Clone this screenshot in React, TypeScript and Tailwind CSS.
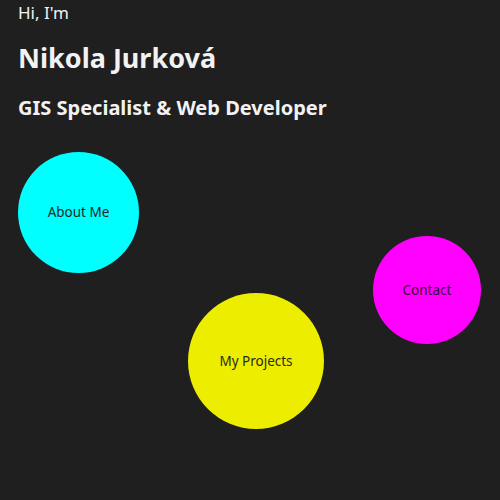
import React from "react";

export default function App() {
  const font = { fontFamily: '"Noto Sans", "Open Sans", sans-serif' };
  return (
    <div className="w-[500px] h-[500px] bg-[#1f1f1f] text-[#f2f2f2] relative overflow-hidden" style={font}>
      <div className="px-[18px] flex flex-col">
        <p className="text-[17px] leading-6 mt-[1px]">Hi, I'm</p>
        <h1 className="text-[27px] font-bold leading-9 mt-[15px]">Nikola Jurková</h1>
        <h2 className="text-[20px] font-bold leading-7 mt-[18px]">GIS Specialist &amp; Web Developer</h2>
      </div>
      <div className="absolute left-[18px] top-[152px] w-[121px] h-[121px] rounded-full bg-[#00ffff] flex items-center justify-center text-[13.5px] text-[#1f2a2a]">
        About Me
      </div>
      <div className="absolute left-[188px] top-[293px] w-[136px] h-[136px] rounded-full bg-[#eded00] flex items-center justify-center text-[13.5px] text-[#2a2a1a]">
        My Projects
      </div>
      <div className="absolute left-[373px] top-[236px] w-[108px] h-[108px] rounded-full bg-[#ff00ff] flex items-center justify-center text-[13.5px] text-[#3a0a3a]">
        Contact
      </div>
    </div>
  );
}
